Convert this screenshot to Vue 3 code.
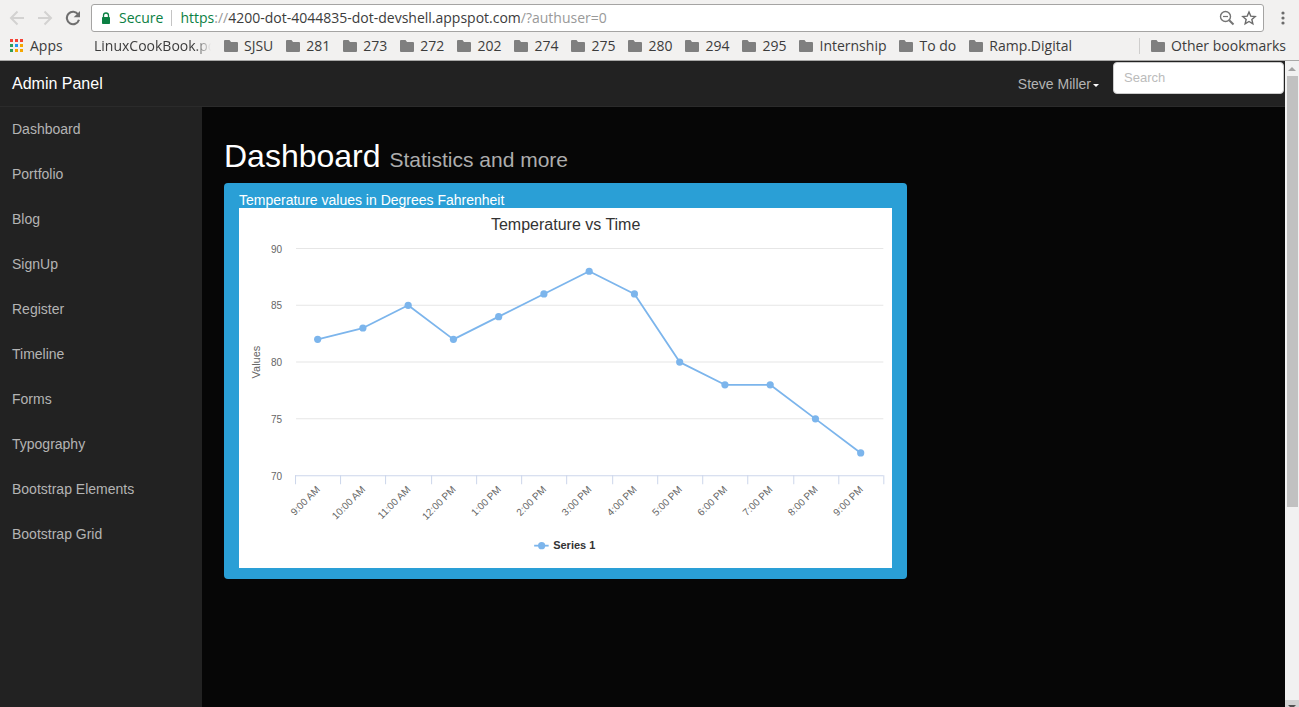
<script setup>
const bookmarks = ['SJSU', '281', '273', '272', '202', '274', '275', '280', '294', '295', 'Internship', 'To do', 'Ramp.Digital']
const appColors = ['#f44336', '#f44336', '#f44336', '#2e9e5b', '#2196f3', '#f5a700', '#2e9e5b', '#f5a700', '#f5a700']
const menu = ['Dashboard', 'Portfolio', 'Blog', 'SignUp', 'Register', 'Timeline', 'Forms', 'Typography', 'Bootstrap Elements', 'Bootstrap Grid']

const series = [
  ['9:00 AM', 82], ['10:00 AM', 83], ['11:00 AM', 85], ['12:00 PM', 82], ['1:00 PM', 84],
  ['2:00 PM', 86], ['3:00 PM', 88], ['4:00 PM', 86], ['5:00 PM', 80], ['6:00 PM', 78],
  ['7:00 PM', 78], ['8:00 PM', 75], ['9:00 PM', 72]
]
const left = 56
const right = 644
const step = (right - left) / series.length
const y = (v) => 267.5 - (v - 70) * 11.35
const points = series.map(([label, value], i) => ({ label, x: left + step * (i + 0.5), y: y(value) }))
const line = points.map((p) => `${p.x},${p.y}`).join(' ')
const levels = [90, 85, 80, 75, 70]
const ticks = Array.from({ length: series.length + 1 }, (_, i) => Math.round(left + step * i) + 0.5)
</script>

<template>
  <div class="window">
    <header class="chrome">
      <div class="toolbar">
        <button class="tool" aria-label="Back">
          <svg width="16" height="16" viewBox="0 0 16 16" fill="none" stroke="#d3d2d1" stroke-width="2"><path d="M15 8H2.5M8.5 1.5L2 8l6.500 6.500" /></svg>
        </button>
        <button class="tool" aria-label="Forward">
          <svg width="16" height="16" viewBox="0 0 16 16" fill="none" stroke="#d3d2d1" stroke-width="2"><path d="M1 8h12.500M7.500 1.500L14 8l-6.500 6.500" /></svg>
        </button>
        <button class="tool" aria-label="Reload">
          <svg width="16" height="16" viewBox="0 0 16 16"><path d="M13.200 4.500A6.200 6.200 0 1 0 14 9.800" fill="none" stroke="#6f6f6f" stroke-width="2.100" /><path d="M15 1v6.300H8.700z" fill="#6f6f6f" /></svg>
        </button>
        <div class="address">
          <button class="secure">
            <svg width="10" height="13" viewBox="0 0 10 13"><path d="M2.500 6V3.500a2.500 2.500 0 0 1 5 0V6" fill="none" stroke="#0b8043" stroke-width="1.300" /><rect x="1" y="5" width="8" height="7" rx="0.800" fill="#0b8043" /></svg>
            Secure
          </button>
          <div class="url" role="textbox" contenteditable="true" spellcheck="false" aria-label="Address"><span class="scheme">https</span><span class="dim">://</span>4200-dot-4044835-dot-devshell.appspot.com<span class="dim">/?authuser=0</span></div>
          <button class="inside" aria-label="Zoom">
            <svg width="16" height="16" viewBox="0 0 16 16" fill="none" stroke="#757575"><circle cx="6.500" cy="6.500" r="5" stroke-width="1.400" /><path d="M4 6.500h5" stroke-width="1.200" /><path d="M10.200 10.200l4.300 4.300" stroke-width="2" /></svg>
          </button>
          <button class="inside" aria-label="Bookmark this page">
            <svg width="16" height="16" viewBox="0 0 16 16" fill="none" stroke="#6b6b6b" stroke-width="1.400"><path d="M8 2l1.750 4.100 4.450.4-3.350 2.950 1 4.350L8 11.500l-3.850 2.300 1-4.350L1.800 6.500l4.450-.4z" /></svg>
          </button>
        </div>
        <button class="dots" aria-label="Menu">
          <svg width="4" height="14" viewBox="0 0 4 14" fill="#6b6b6b"><circle cx="2" cy="2" r="1.600" /><circle cx="2" cy="7" r="1.600" /><circle cx="2" cy="12" r="1.600" /></svg>
        </button>
      </div>
      <nav class="bookmarks" aria-label="Bookmarks">
        <a href="#" class="mark apps">
          <svg width="14" height="14" viewBox="0 0 14 14"><rect v-for="(c, i) in appColors" :key="i" :x="(i % 3) * 5" :y="Math.floor(i / 3) * 5" width="3" height="3" :fill="c" /></svg>
          Apps
        </a>
        <a href="#" class="mark pdf">LinuxCookBook.pd</a>
        <a v-for="b in bookmarks" :key="b" href="#" class="mark">
          <svg width="14" height="12" viewBox="0 0 14 12"><path d="M1 0h4.500l1.500 2h6a1 1 0 0 1 1 1v8a1 1 0 0 1-1 1H1a1 1 0 0 1-1-1V1a1 1 0 0 1 1-1z" fill="#7f7f7f" /></svg>
          {{ b }}
        </a>
        <a href="#" class="mark other">
          <svg width="14" height="12" viewBox="0 0 14 12"><path d="M1 0h4.500l1.500 2h6a1 1 0 0 1 1 1v8a1 1 0 0 1-1 1H1a1 1 0 0 1-1-1V1a1 1 0 0 1 1-1z" fill="#7f7f7f" /></svg>
          Other bookmarks
        </a>
      </nav>
    </header>

    <div class="viewport">
      <div class="page">
        <header class="navbar">
          <a href="#" class="brand">Admin Panel</a>
          <button class="user">Steve Miller<span class="caret"></span></button>
          <input class="search" type="text" placeholder="Search" aria-label="Search" />
        </header>
        <div class="body">
          <nav class="side" aria-label="Sections">
            <a v-for="m in menu" :key="m" href="#">{{ m }}</a>
          </nav>
          <main>
            <h1>Dashboard <small>Statistics and more</small></h1>
            <div class="row">
              <section class="panel">
                <h2>Temperature values in Degrees Fahrenheit</h2>
                <svg class="chart" viewBox="0 0 653 360" role="img" aria-label="Temperature vs Time">
                  <text class="title" x="326.500" y="22">Temperature vs Time</text>
                  <g v-for="v in levels" :key="v">
                    <line v-if="v > 70" :x1="left + 1" :x2="right" :y1="y(v)" :y2="y(v)" stroke="#e6e6e6" />
                    <text class="level" x="43" :y="Math.round(y(v)) + 4">{{ v }}</text>
                  </g>
                  <path :d="`M${left} 267.5H${right}`" stroke="#ccd6eb" />
                  <path v-for="t in ticks" :key="t" :d="`M${t} 267v9`" stroke="#ccd6eb" />
                  <text class="values" transform="translate(21 154) rotate(-90)">Values</text>
                  <text v-for="p in points" :key="p.label" class="hour" :transform="`translate(${p.x + 3} 282) rotate(-45)`">{{ p.label }}</text>
                  <polyline :points="line" fill="none" stroke="#7cb5ec" stroke-width="1.800" stroke-linejoin="round" />
                  <circle v-for="p in points" :key="p.x" :cx="p.x" :cy="p.y" r="3.600" fill="#7cb5ec" />
                  <path d="M295 337.500h14.500" stroke="#7cb5ec" stroke-width="1.800" />
                  <circle cx="302.500" cy="337.500" r="3.600" fill="#7cb5ec" />
                  <text class="legend" x="314" y="341">Series 1</text>
                </svg>
              </section>
            </div>
          </main>
        </div>
      </div>
      <div class="scrollbar" aria-hidden="true">
        <svg width="14" height="15" viewBox="0 0 14 15"><path d="M3 10l4-4 4 4z" fill="#a3a3a3" /></svg>
        <div class="track"><div class="thumb"></div></div>
        <div class="down"><svg width="14" height="14" viewBox="0 0 14 14"><path d="M3 5h8L7 9z" fill="#505050" /></svg></div>
      </div>
    </div>
  </div>
</template>

<style>
body { margin: 0; }
</style>

<style scoped>
* { box-sizing: border-box; }
a { color: inherit; text-decoration: none; }
button { border: 0; padding: 0; background: none; font: inherit; color: inherit; display: flex; align-items: center; }
svg { display: block; flex: none; }
.window { height: 100vh; display: flex; flex-direction: column; overflow: hidden; font-family: "Liberation Sans", Arial, sans-serif; font-size: 14px; }
.chrome { flex: none; background: #f2f1f0; border-bottom: 1px solid #a9a8a7; font-family: "Open Sans", "Noto Sans", sans-serif; color: #3c3c3c; }
.toolbar { display: flex; align-items: center; gap: 12px; padding: 4px 14px 0 9px; height: 32px; }
.tool { flex: none; }
.address { flex: 1; min-width: 0; display: flex; align-items: center; height: 28px; margin-right: 5px; padding: 0 6px 0 9px; background: #fff; border: 1px solid #a5a4a3; border-radius: 3px; }
.tool + .address { margin-left: -2px; }
.secure { color: #0b8043; gap: 8px; padding-right: 8px; border-right: 1px solid #c4c4c4; line-height: 16px; }
.url { flex: 1; min-width: 0; padding-left: 8px; white-space: nowrap; overflow: hidden; outline: 0; line-height: 20px; }
.scheme { color: #0b8043; }
.dim { color: #999; }
.inside { margin-left: 6px; }
.bookmarks { height: 28px; display: flex; align-items: center; gap: 13px; padding: 0 13px 0 10px; white-space: nowrap; }
.mark { display: flex; align-items: center; gap: 6px; line-height: 16px; }
.apps { width: 71px; }
.pdf { width: 117px; -webkit-mask-image: linear-gradient(90deg, #000 86%, transparent); mask-image: linear-gradient(90deg, #000 86%, transparent); }
.other { margin-left: auto; padding-left: 11px; border-left: 1px solid #cfcecd; }
.viewport { flex: 1; min-height: 0; display: flex; }
.page { flex: 1; min-width: 0; display: flex; flex-direction: column; background: #222; color: #b4b4b4; }
.navbar { height: 46px; display: flex; align-items: center; padding: 0 1px 0 12px; border-bottom: 1px solid #2b2b2b; }
.brand { color: #fff; font-size: 16px; line-height: 46px; margin-right: auto; }
.user { gap: 2px; margin-right: 14px; }
.caret { border: 3px solid transparent; border-top-color: #fff; border-bottom: 0; margin-top: 3px; }
.search { align-self: flex-start; width: 171px; height: 32px; margin-top: 1px; padding: 0 10px 2px; border: 1px solid #ccc; border-radius: 4px; background: #fff; font: 13px "Liberation Sans", Arial, sans-serif; color: #555; }
.search::placeholder { color: #bbb; opacity: 1; }
.body { flex: 1; min-height: 0; display: flex; }
.side { flex: none; width: 202px; display: flex; flex-direction: column; }
.side a { line-height: 45px; padding-left: 12px; }
main { flex: 1; min-width: 0; padding: 31px 22px 0; background: #060606; }
h1 { margin: 0 0 5px; font-size: 32px; line-height: 36px; font-weight: 400; color: #fff; }
small { font-size: 21px; color: #adadad; }
.row { display: grid; grid-template-columns: 2fr 1fr; gap: 14px; }
.panel { min-width: 0; padding: 9px 15px 11px; border-radius: 4px; background: #2a9fd6; }
h2 { margin: 0; font-size: 14px; line-height: 16px; font-weight: 400; color: #fff; }
.chart { width: 100%; background: #fff; fill: #666; font-size: 10px; }
.title { font-size: 16px; fill: #333; text-anchor: middle; }
.level, .hour { text-anchor: end; }
.values { font-size: 11px; text-anchor: middle; }
.legend { font-size: 11px; font-weight: 700; fill: #333; }
.scrollbar { flex: none; width: 14px; display: flex; flex-direction: column; background: #f1f1f1; }
.track { flex: 1; padding: 0 1px 0 2px; }
.thumb { height: 69%; background: #c1c1c1; }
.down { height: 7px; overflow: hidden; background: #d2d2d2; }
</style>
